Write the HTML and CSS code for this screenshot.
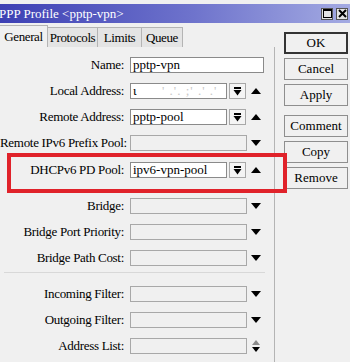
FILE: index.html
```html
<!DOCTYPE html>
<html lang="en">
<head>
    <meta charset="UTF-8">
    <title>PPP Profile</title>
    <link rel="stylesheet" href="styles.css">
</head>
<body>
    <div class="window">
        <div class="titlebar">
            <span class="title">PPP Profile &lt;pptp-vpn&gt;</span>
            <div class="winButtons">
                <span class="winBtn"><svg width="9" height="9" viewBox="0 0 9 9"><rect x="0.5" y="0.5" width="8" height="8" fill="none" stroke="#000" stroke-width="1"/><rect x="0" y="0" width="9" height="2" fill="#000"/></svg></span>
                <span class="winBtn"><svg width="9" height="9" viewBox="0 0 9 9"><path d="M1 1L8 8M8 1L1 8" stroke="#000" stroke-width="2"/></svg></span>
            </div>
        </div>

        <div class="main">
            <div class="leftCol">
                <div class="tabs">
                    <span class="tab active">General</span>
                    <span class="tab t2">Protocols</span>
                    <span class="tab t3">Limits</span>
                    <span class="tab t4">Queue</span>
                </div>

                <div class="panel">
                    <div class="row">
                        <label>Name:</label>
                        <div class="field wide">pptp-vpn</div>
                    </div>
                    <div class="row">
                        <label>Local Address:</label>
                        <div class="field short"><span>ι</span><span class="blur">&nbsp;&nbsp;&nbsp;&nbsp;&nbsp;&nbsp;' .'. ;' .' .'</span></div>
                        <span class="dropBtn"><svg width="9" height="9" viewBox="0 0 9 9"><rect x="1" y="0" width="7" height="2" fill="#000"/><path d="M0.5 3H8.5L4.5 8.5Z" fill="#000"/></svg></span>
                        <span class="arrow"><svg width="10" height="6" viewBox="0 0 10 6"><path d="M0 6H10L5 0Z" fill="#000"/></svg></span>
                    </div>
                    <div class="row">
                        <label>Remote Address:</label>
                        <div class="field short">pptp-pool</div>
                        <span class="dropBtn"><svg width="9" height="9" viewBox="0 0 9 9"><rect x="1" y="0" width="7" height="2" fill="#000"/><path d="M0.5 3H8.5L4.5 8.5Z" fill="#000"/></svg></span>
                        <span class="arrow"><svg width="10" height="6" viewBox="0 0 10 6"><path d="M0 6H10L5 0Z" fill="#000"/></svg></span>
                    </div>
                    <div class="row">
                        <label>Remote IPv6 Prefix Pool:</label>
                        <div class="field medium off"></div>
                        <span class="arrow"><svg width="10" height="6" viewBox="0 0 10 6"><path d="M0 0H10L5 6Z" fill="#000"/></svg></span>
                    </div>
                    <div class="row marked">
                        <label>DHCPv6 PD Pool:</label>
                        <div class="field short">ipv6-vpn-pool</div>
                        <span class="dropBtn"><svg width="9" height="9" viewBox="0 0 9 9"><rect x="1" y="0" width="7" height="2" fill="#000"/><path d="M0.5 3H8.5L4.5 8.5Z" fill="#000"/></svg></span>
                        <span class="arrow"><svg width="10" height="6" viewBox="0 0 10 6"><path d="M0 6H10L5 0Z" fill="#000"/></svg></span>
                    </div>

                    <div class="group">
                        <div class="row">
                            <label>Bridge:</label>
                            <div class="field medium off"></div>
                            <span class="arrow"><svg width="10" height="6" viewBox="0 0 10 6"><path d="M0 0H10L5 6Z" fill="#000"/></svg></span>
                        </div>
                        <div class="row">
                            <label>Bridge Port Priority:</label>
                            <div class="field medium off"></div>
                            <span class="arrow"><svg width="10" height="6" viewBox="0 0 10 6"><path d="M0 0H10L5 6Z" fill="#000"/></svg></span>
                        </div>
                        <div class="row">
                            <label>Bridge Path Cost:</label>
                            <div class="field medium off"></div>
                            <span class="arrow"><svg width="10" height="6" viewBox="0 0 10 6"><path d="M0 0H10L5 6Z" fill="#000"/></svg></span>
                        </div>
                    </div>

                    <div class="separator"></div>

                    <div class="row">
                        <label>Incoming Filter:</label>
                        <div class="field medium off"></div>
                        <span class="arrow"><svg width="10" height="6" viewBox="0 0 10 6"><path d="M0 0H10L5 6Z" fill="#000"/></svg></span>
                    </div>
                    <div class="row">
                        <label>Outgoing Filter:</label>
                        <div class="field medium off"></div>
                        <span class="arrow"><svg width="10" height="6" viewBox="0 0 10 6"><path d="M0 0H10L5 6Z" fill="#000"/></svg></span>
                    </div>
                    <div class="row">
                        <label>Address List:</label>
                        <div class="field medium off"></div>
                        <span class="arrow"><svg width="10" height="13" viewBox="0 0 10 13"><path d="M1 5H9L5 0Z" fill="#8a8a8a"/><path d="M1 7H9L5 12Z" fill="#000"/></svg></span>
                    </div>
                </div>
            </div>

            <div class="rightCol">
                <button class="btn default">OK</button>
                <button class="btn">Cancel</button>
                <button class="btn">Apply</button>
                <button class="btn spaced">Comment</button>
                <button class="btn">Copy</button>
                <button class="btn">Remove</button>
            </div>
        </div>
    </div>
</body>
</html>
```

FILE: styles.css
```css
* {
    margin: 0;
    padding: 0;
    box-sizing: border-box;
}

body {
    background-color: #f0f0f0;
    font-family: 'Liberation Serif', 'DejaVu Serif', serif;
    font-size: 13px;
    color: #000;
    width: 350px;
    height: 362px;
    overflow: hidden;
}

.window {
    padding-top: 4px;
}

/* Title bar */
.titlebar {
    height: 19px;
    display: flex;
    align-items: center;
    justify-content: space-between;
    background-image: linear-gradient(90deg, #3d40b4, #6e73cc 55%, #a3aae2);
    color: white;
    padding-right: 2px;
}

.title {
    font-size: 13px;
    margin-left: -1px;
}

.winButtons {
    display: flex;
    gap: 3px;
}

.winBtn {
    width: 12px;
    height: 12px;
    background-color: #e4e4e4;
    border: 1px solid #555;
    display: flex;
    align-items: center;
    justify-content: center;
}

.main {
    display: flex;
}

.leftCol {
    width: 275px;
}

/* Tabs */
.tabs {
    display: flex;
    align-items: flex-end;
    height: 24px;
}

.tab {
    height: 20px;
    display: flex;
    align-items: center;
    justify-content: center;
    font-size: 13px;
    letter-spacing: -0.4px;
    background-color: #e4e4e4;
    border: 1px solid #b4b4b4;
    border-bottom: none;
    margin-right: -1px;
}

.tab.active {
    width: 48px;
    height: 22px;
    background-color: #f0f0f0;
    border-left: none;
    z-index: 1;
}

.tab.t2 {
    width: 51px;
}

.tab.t3 {
    width: 45px;
}

.tab.t4 {
    width: 42px;
}

.panel {
    border-right: 1px solid #b4b4b4;
    height: 315px;
    padding-top: 5px;
}

/* Form rows */
.row {
    display: flex;
    align-items: center;
    height: 26px;
    position: relative;
}

.row label {
    width: 125px;
    text-align: right;
    padding-right: 1px;
    letter-spacing: -0.3px;
    white-space: nowrap;
}

.field {
    margin-left: 5px;
    height: 16px;
    background-color: white;
    border: 1px solid #8a8a8a;
    padding-left: 2px;
    line-height: 14px;
    white-space: nowrap;
    overflow: hidden;
}

.field.wide {
    width: 134px;
}

.field.short {
    width: 97px;
}

.field.medium {
    width: 117px;
}

.field.off {
    background-color: #f0f0f0;
    border-color: #a8a8a8;
}

.blur {
    color: #c8c8c8;
    letter-spacing: 1px;
}

.dropBtn {
    width: 17px;
    height: 16px;
    margin-left: 2px;
    border: 1px solid #a8a8a8;
    background-color: #f4f4f4;
    display: flex;
    align-items: center;
    justify-content: center;
}

.arrow {
    width: 20px;
    display: flex;
    justify-content: center;
    margin-left: -1px;
}

.dropBtn + .arrow {
    margin-left: 0;
}

/* red highlight box around the DHCPv6 row */
.marked {
    margin-top: 1px;
}

.marked::after {
    content: '';
    position: absolute;
    left: 7px;
    top: -4px;
    width: 272px;
    height: 32px;
    border: 4px solid #e0222a;
}

.group {
    margin-top: 10px;
}

.separator {
    height: 1px;
    background-color: #d8d8d8;
    margin: 1px 9px 8px 4px;
}

/* Right buttons */
.rightCol {
    display: flex;
    flex-direction: column;
    gap: 4px;
    padding-top: 9px;
    padding-left: 9px;
}

.btn {
    width: 64px;
    height: 22px;
    font-family: 'Liberation Serif', 'DejaVu Serif', serif;
    font-size: 13px;
    background-color: #f0f0f0;
    border: 1px solid #8e8e8e;
    color: #000;
}

.btn.default {
    border: 2px solid #333;
}

.btn.spaced {
    margin-top: 5px;
}
```
